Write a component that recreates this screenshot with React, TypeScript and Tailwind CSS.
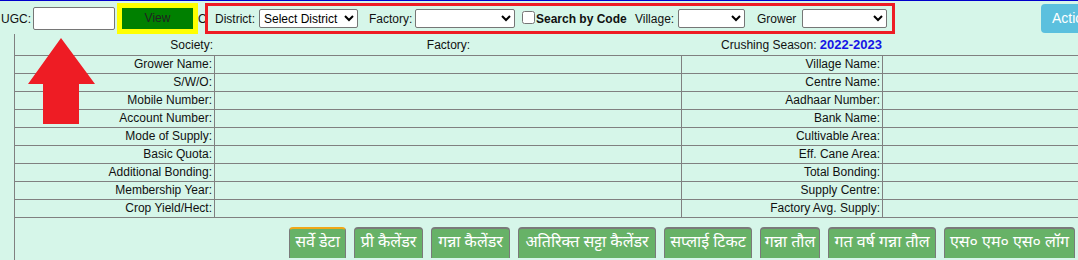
import React from "react";

const leftRows = [
  "Grower Name:",
  "S/W/O:",
  "Mobile Number:",
  "Account Number:",
  "Mode of Supply:",
  "Basic Quota:",
  "Additional Bonding:",
  "Membership Year:",
  "Crop Yield/Hect:",
];

const rightRows = [
  "Village Name:",
  "Centre Name:",
  "Aadhaar Number:",
  "Bank Name:",
  "Cultivable Area:",
  "Eff. Cane Area:",
  "Total Bonding:",
  "Supply Centre:",
  "Factory Avg. Supply:",
];

const tabs = [
  { label: "सर्वे डेटा", w: "w-[57px]", active: true },
  { label: "प्री कैलेंडर", w: "w-[69px]" },
  { label: "गन्ना कैलेंडर", w: "w-[79px]" },
  { label: "अतिरिक्त सट्टा कैलेंडर", w: "w-[138px]" },
  { label: "सप्लाई टिकट", w: "w-[88px]" },
  { label: "गन्ना तौल", w: "w-[60px]" },
  { label: "गत वर्ष गन्ना तौल", w: "w-[108px]" },
  { label: "एस० एम० एस० लॉग", w: "w-[131px]" },
];

function Select({ className }: { className: string }) {
  return (
    <select
      className={`shrink-0 h-[19px] bg-white border border-[#767676] rounded-[2px] text-[12px] text-black ${className}`}
      defaultValue=""
    >
      <option value=""></option>
    </select>
  );
}

export default function App() {
  return (
    <div className="relative w-[1078px] h-[260px] overflow-hidden bg-[#d6f6e9] border-t border-[#0000cc] font-['Liberation_Sans',Arial,sans-serif] text-[12px] text-[#111]">
      {/* filter bar */}
      <div className="flex items-start h-[33px] whitespace-nowrap">
        <span className="mt-[11px] pl-[1px] w-[33px] shrink-0 leading-[14px]">UGC:</span>
        <input
          type="text"
          className="mt-[6px] w-[82px] shrink-0 h-[23px] bg-white border border-[#767676] rounded-[2px]"
        />
        <div className="mt-[2px] ml-[2px] border-[5px] border-[#ffff00] shrink-0">
          <button
            type="button"
            className="block w-[71px] h-[21px] bg-[#008000] text-[#222] text-[12px] leading-[21px]"
          >
            View
          </button>
        </div>
        <span className="mt-[11px] w-[7px] shrink-0 overflow-hidden leading-[14px]">OR</span>
        <div className="mt-[2px] flex items-center h-[31px] w-[690px] shrink-0 border-[3px] border-[#ee1c24] pl-[7px]">
          <span className="w-[44px] shrink-0">District:</span>
          <select
            className="shrink-0 w-[99px] h-[19px] bg-white border border-[#767676] rounded-[2px] text-[12px] text-black"
            defaultValue="0"
          >
            <option value="0">Select District</option>
          </select>
          <span className="ml-[11px] w-[46px] shrink-0">Factory:</span>
          <Select className="w-[100px]" />
          <input type="checkbox" className="ml-[7px] shrink-0 w-[13px] h-[13px] mb-[2px]" />
          <span className="ml-[1px] w-[99px] shrink-0 font-bold">Search by Code</span>
          <span className="w-[43px] shrink-0">Village:</span>
          <Select className="w-[67px]" />
          <span className="ml-[12px] w-[45px] shrink-0">Grower</span>
          <Select className="w-[85px]" />
        </div>
        <button
          type="button"
          className="mt-[3px] ml-[146px] shrink-0 w-[80px] h-[29px] rounded-[4px] bg-[#5bc0de] text-white text-[14px] text-left pl-[11px]"
        >
          Action
        </button>
      </div>

      {/* details grid */}
      <div className="ml-[14px] w-[1300px] border-l border-[#808080]">
        <div className="flex h-[21px] items-center">
          <div className="w-[200px] text-right pr-[2px]">Society:</div>
          <div className="w-[467px] text-center">Factory:</div>
          <div className="w-[201px] text-right pr-[1px]">
            Crushing Season:{" "}
            <span className="font-bold text-[13px] text-[#1414e6]">2022-2023</span>
          </div>
        </div>
        {leftRows.map((label, i) => (
          <div key={label} className="flex h-[18px] border-t border-[#808080]">
            <div className="w-[200px] border-r border-[#808080] text-right pr-[2px] leading-[17px]">
              {label}
            </div>
            <div className="w-[467px] border-r border-[#808080]"></div>
            <div className="w-[201px] border-r border-[#808080] text-right pr-[2px] leading-[17px]">
              {rightRows[i]}
            </div>
            <div className="w-[400px]"></div>
          </div>
        ))}
        <div className="border-t border-[#808080] h-[60px] pt-[9px] pl-[274px] flex gap-[8px]">
          {tabs.map((t) => (
            <button
              key={t.label}
              type="button"
              className={`${t.w} shrink-0 h-[31px] bg-[#67b267] text-white text-[16px] leading-[26px] rounded-t-[4px] border border-b-0 border-[#7a7a7a] whitespace-nowrap overflow-hidden font-['Noto_Sans_Devanagari','Lohit_Devanagari',Mangal,'Noto_Sans',sans-serif] ${
                t.active ? "border-t-2 border-t-[#f0a818]" : "border-t-2"
              }`}
            >
              {t.label}
            </button>
          ))}
        </div>
      </div>

      {/* red arrow pointing at UGC input */}
      <svg
        className="absolute left-[28px] top-[37px]"
        width="68"
        height="86"
        viewBox="0 0 68 86"
      >
        <polygon points="33,0 67,46 51,46 51,86 15,86 15,46 0,46" fill="#ee1c24" />
      </svg>
    </div>
  );
}
